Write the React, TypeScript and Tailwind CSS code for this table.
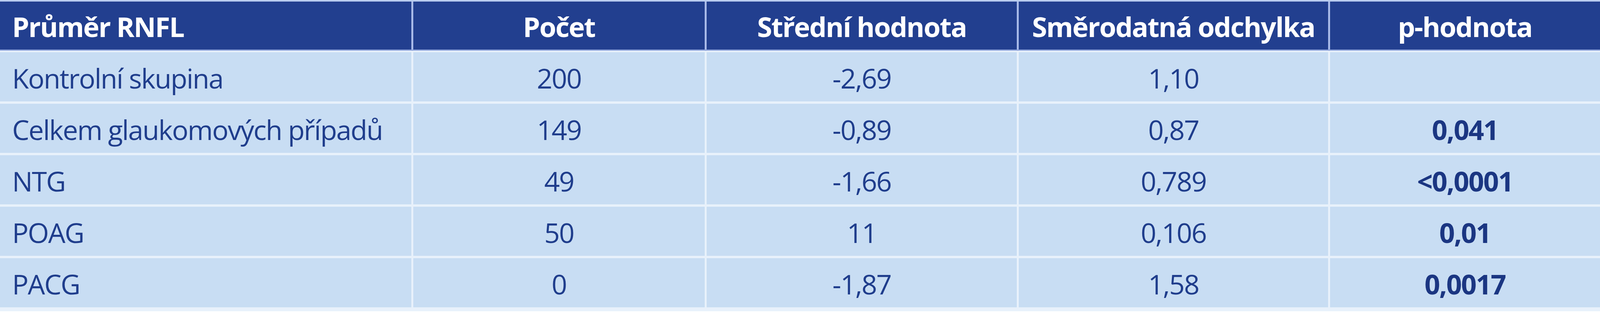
const headers = ["Průměr RNFL", "Počet", "Střední hodnota", "Směrodatná odchylka", "p-hodnota"]

const rows = [
  ["Kontrolní skupina", "200", "-2,69", "1,10", ""],
  ["Celkem glaukomových případů", "149", "-0,89", "0,87", "0,041"],
  ["NTG", "49", "-1,66", "0,789", "<0,0001"],
  ["POAG", "50", "11", "0,106", "0,01"],
  ["PACG", "0", "-1,87", "1,58", "0,0017"],
]

// column widths taken from the original table, scaled with the page
const cols = "grid grid-cols-[1135fr_804fr_856fr_853fr_745fr] gap-x-[5px]"

export default function App() {
  return (
    <div
      className="w-full h-[800px] bg-white text-[70px] leading-none tracking-[-0.03em] whitespace-nowrap"
      style={{ fontFamily: '"Open Sans", "Noto Sans", sans-serif' }}
    >
      <div className="h-[4px] bg-[#b9ccef]" />
      <div className={`${cols} h-[126px] bg-[#a8bae8] border-b-[3px] border-[#8fa4da]`}>
        {headers.map((h, i) => (
          <div
            key={h}
            className={`flex items-center bg-[#223f8f] text-white font-bold pt-[4px] ${
              i === 0 ? "pl-[31px]" : "justify-center"
            }`}
          >
            {h}
          </div>
        ))}
      </div>
      <div className="flex flex-col gap-y-[6px] bg-[#e8f1fb] pt-[4px] pb-[10px]">
        {rows.map((r) => (
          <div key={r[0]} className={`${cols} h-[126px]`}>
            {r.map((c, i) => (
              <div
                key={i}
                className={`flex items-center bg-[#c8ddf3] pt-[6px] ${
                  i === 0 ? "pl-[31px]" : "justify-center"
                } ${i === 4 ? "font-bold text-[#1b3682]" : "text-[#1f3d8c]"}`}
              >
                {c}
              </div>
            ))}
          </div>
        ))}
      </div>
    </div>
  )
}
